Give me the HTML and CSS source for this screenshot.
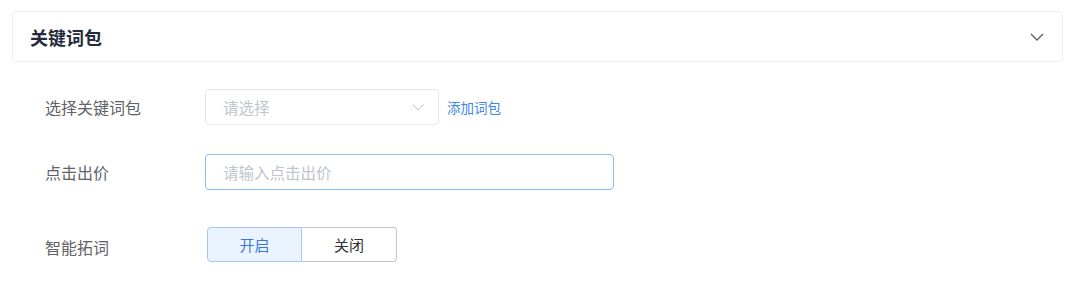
FILE: index.html
```html
<!DOCTYPE html>
<html lang="zh-CN">
<head>
<meta charset="utf-8">
<link rel="stylesheet" href="styles.css">
</head>
<body>
<div class="page">
  <div class="card-header">
    <span class="title">关键词包</span>
    <svg class="chev" width="14" height="8" viewBox="0 0 14 8"><path d="M1 1 L7 7 L13 1" fill="none" stroke="#5a6270" stroke-width="1.4"/></svg>
  </div>
  <div class="form">
    <div class="row row1">
      <label class="label">选择关键词包</label>
      <div class="select">
        <span class="ph">请选择</span>
        <svg width="12" height="7" viewBox="0 0 12 7"><path d="M0.5 0.5 L6 6 L11.5 0.5" fill="none" stroke="#c0c4cc" stroke-width="1"/></svg>
      </div>
      <a class="link">添加词包</a>
    </div>
    <div class="row row2">
      <label class="label">点击出价</label>
      <div class="input"><span class="ph">请输入点击出价</span></div>
    </div>
    <div class="row row3">
      <label class="label">智能拓词</label>
      <div class="btn-group">
        <span class="btn active">开启</span>
        <span class="btn">关闭</span>
      </div>
    </div>
  </div>
</div>
</body>
</html>
```
FILE: styles.css
```css
* { box-sizing: border-box; }
html, body { margin: 0; padding: 0; background: #fff; }
body { font-family: "Noto Sans CJK SC", "Noto Sans", sans-serif; }
.page { padding: 11px 17px 0 12px; width: 1080px; }
.card-header {
  height: 51px;
  border: 1px solid #ebeef3;
  border-radius: 4px;
  display: flex;
  align-items: center;
  justify-content: space-between;
  padding: 0 18px 0 17px;
}
.title { font-size: 18px; font-weight: 700; color: #252b3a; }
.chev { margin-top: 1px; }
.form { padding-left: 33px; }
.row { display: flex; align-items: center; }
.label { width: 160px; font-size: 16px; color: #606266; }
.row1 { margin-top: 27px; height: 36px; }
.row2 { margin-top: 29px; height: 36px; }
.row3 { margin-top: 37px; height: 35px; }
.row3 .label { margin-top: 4px; }
.select {
  width: 234px; height: 36px;
  border: 1px solid #e4e7ed; border-radius: 4px;
  display: flex; align-items: center; justify-content: space-between;
  padding: 0 14px 0 17px;
}
.ph { font-size: 15.5px; color: #c0c4cc; }
.link { margin-left: 8px; font-size: 13.5px; color: #3d86e6; }
.input {
  width: 409px; height: 36px;
  border: 1px solid #8cc0f2; border-radius: 4px;
  display: flex; align-items: center; padding-left: 17px;
}
.btn-group { display: flex; margin-left: 2px; margin-top: -1px; }
.btn {
  width: 95px; height: 35px;
  display: flex; align-items: center; justify-content: center;
  font-size: 15px; color: #303133;
  border: 1px solid #c0c4cc; background: #fff;
}
.btn:first-child { border-radius: 4px 0 0 4px; }
.btn:last-child { border-radius: 0 4px 4px 0; border-left: none; }
.btn.active { background: #ebf3fe; color: #3a78d8; border-color: #a8c5ef; }
```
